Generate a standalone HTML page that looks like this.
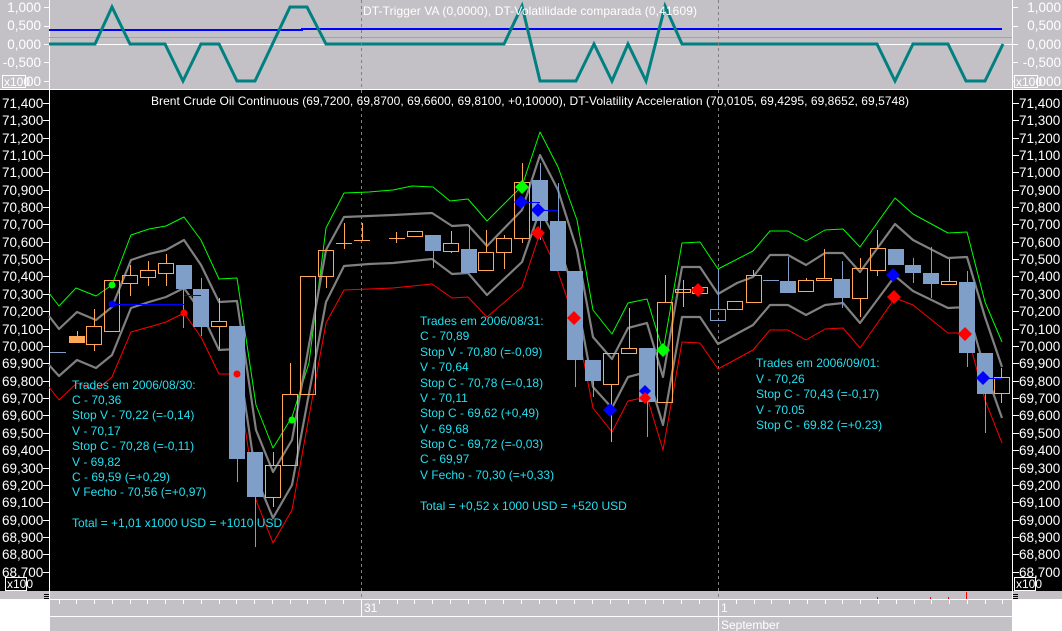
<!DOCTYPE html>
<html><head><meta charset="utf-8"><style>
html,body{margin:0;padding:0;background:#fff;width:1062px;height:631px;overflow:hidden}
svg{display:block}
text{font-family:"Liberation Sans",sans-serif;font-size:12px}
.ax text{font-size:13.5px}
</style></head><body>
<svg width="1062" height="631" viewBox="0 0 1062 631" xmlns="http://www.w3.org/2000/svg" shape-rendering="crispEdges">
<rect x="0" y="0" width="1062" height="90" fill="#c3c1c5"/>
<rect x="0" y="90" width="1062" height="501" fill="#000"/>
<rect x="0" y="591" width="1062" height="8" fill="#c3c1c5"/>
<rect x="50" y="599" width="962" height="32" fill="#c3c1c5"/>
<line x1="0" y1="89.5" x2="1062" y2="89.5" stroke="#fff"/>
<line x1="49.5" y1="0" x2="49.5" y2="599" stroke="#fff"/>
<line x1="1012.5" y1="0" x2="1012.5" y2="599" stroke="#fff"/>
<line x1="49" y1="44.5" x2="1012" y2="44.5" stroke="#fff"/>
<line x1="49" y1="37.5" x2="1012" y2="37.5" stroke="#8fa6c6"/>
<polyline points="49,30 302,30 302,29 1002,29" fill="none" stroke="#0000ff" stroke-width="2"/>
<polyline shape-rendering="auto" points="49,44 95,44 112,7 130,44 165,44 183,81 201,44 219,44 237,81 255,81 290,7 307,7 326,44 504,44 522,6 540,81 576,81 594,44 612,81 628,44 646,81 665,6 682,44 877,44 895,81 913,44 948,44 966,81 985,81 1003,44" fill="none" stroke="#008080" stroke-width="3"/>
<text x="530" y="15" text-anchor="middle" fill="#fff" textLength="334">DT-Trigger VA (0,0000), DT-Volatilidade comparada (0,41609)</text>
<g class="ax" fill="#fff" text-anchor="end">
<text x="41" y="12">1,000</text><text x="41" y="30">0,500</text><text x="41" y="49">0,000</text><text x="41" y="67">-0,500</text><text x="41" y="86">000</text>
<text x="1061" y="12">1,000</text><text x="1061" y="30">0,500</text><text x="1061" y="49">0,000</text><text x="1061" y="67">-0,500</text><text x="1061" y="86">000</text>
</g>
<path stroke="#fff" d="M44 7.5h5M44 26.5h5M44 44.5h5M44 62.5h5M44 81.5h5M1013 7.5h5M1013 26.5h5M1013 44.5h5M1013 62.5h5M1013 81.5h5"/>
<rect x="2.5" y="75.5" width="23" height="12" fill="#c3c1c5" stroke="#fff"/>
<text x="4" y="86" fill="#fff" font-size="10">x100</text>
<rect x="1014.5" y="75.5" width="23" height="12" fill="#c3c1c5" stroke="#fff"/>
<text x="1016" y="86" fill="#fff" font-size="10">x100</text>
<line x1="361.5" y1="0" x2="361.5" y2="599" stroke="#808080" stroke-dasharray="3,3"/>
<line x1="718.5" y1="0" x2="718.5" y2="599" stroke="#808080" stroke-dasharray="3,3"/>
<text x="530" y="105" text-anchor="middle" fill="#fff" textLength="758">Brent Crude Oil Continuous (69,7200, 69,8700, 69,6600, 69,8100, +0,10000), DT-Volatility Acceleration (70,0105, 69,4295, 69,8652, 69,5748)</text>
<g class="ax" fill="#fff">
<text x="2" y="108">71,400</text><text x="2" y="125">71,300</text><text x="2" y="143">71,200</text><text x="2" y="160">71,100</text><text x="2" y="177">71,000</text><text x="2" y="195">70,900</text><text x="2" y="212">70,800</text><text x="2" y="229">70,700</text><text x="2" y="247">70,600</text><text x="2" y="264">70,500</text><text x="2" y="281">70,400</text><text x="2" y="299">70,300</text><text x="2" y="316">70,200</text><text x="2" y="334">70,100</text><text x="2" y="351">70,000</text><text x="2" y="368">69,900</text><text x="2" y="386">69,800</text><text x="2" y="403">69,700</text><text x="2" y="420">69,600</text><text x="2" y="438">69,500</text><text x="2" y="455">69,400</text><text x="2" y="473">69,300</text><text x="2" y="490">69,200</text><text x="2" y="507">69,100</text><text x="2" y="525">69,000</text><text x="2" y="542">68,900</text><text x="2" y="559">68,800</text><text x="2" y="577">68,700</text>
</g>
<g class="ax" fill="#fff">
<text x="1019" y="108">71,400</text><text x="1019" y="125">71,300</text><text x="1019" y="143">71,200</text><text x="1019" y="160">71,100</text><text x="1019" y="177">71,000</text><text x="1019" y="195">70,900</text><text x="1019" y="212">70,800</text><text x="1019" y="229">70,700</text><text x="1019" y="247">70,600</text><text x="1019" y="264">70,500</text><text x="1019" y="281">70,400</text><text x="1019" y="299">70,300</text><text x="1019" y="316">70,200</text><text x="1019" y="334">70,100</text><text x="1019" y="351">70,000</text><text x="1019" y="368">69,900</text><text x="1019" y="386">69,800</text><text x="1019" y="403">69,700</text><text x="1019" y="420">69,600</text><text x="1019" y="438">69,500</text><text x="1019" y="455">69,400</text><text x="1019" y="473">69,300</text><text x="1019" y="490">69,200</text><text x="1019" y="507">69,100</text><text x="1019" y="525">69,000</text><text x="1019" y="542">68,900</text><text x="1019" y="559">68,800</text><text x="1019" y="577">68,700</text>
</g>
<g stroke="#fff">
<path d="M43 103.5h6M43 120.5h6M43 138.5h6M43 155.5h6M43 172.5h6M43 190.5h6M43 207.5h6M43 224.5h6M43 242.5h6M43 259.5h6M43 276.5h6M43 294.5h6M43 311.5h6M43 329.5h6M43 346.5h6M43 363.5h6M43 381.5h6M43 398.5h6M43 415.5h6M43 433.5h6M43 450.5h6M43 468.5h6M43 485.5h6M43 502.5h6M43 520.5h6M43 537.5h6M43 554.5h6M43 572.5h6"/>
<path d="M1013 103.5h6M1013 120.5h6M1013 138.5h6M1013 155.5h6M1013 172.5h6M1013 190.5h6M1013 207.5h6M1013 224.5h6M1013 242.5h6M1013 259.5h6M1013 276.5h6M1013 294.5h6M1013 311.5h6M1013 329.5h6M1013 346.5h6M1013 363.5h6M1013 381.5h6M1013 398.5h6M1013 415.5h6M1013 433.5h6M1013 450.5h6M1013 468.5h6M1013 485.5h6M1013 502.5h6M1013 520.5h6M1013 537.5h6M1013 554.5h6M1013 572.5h6"/>
</g>
<rect x="5.5" y="577.5" width="21" height="13" fill="#000" stroke="#fff"/>
<text x="7" y="588" fill="#fff" font-size="11">x100</text>
<rect x="1014.5" y="577.5" width="21" height="13" fill="#000" stroke="#fff"/>
<text x="1016" y="588" fill="#fff" font-size="11">x100</text>

<g fill="none" shape-rendering="auto" stroke-linejoin="round">
<polyline stroke="#00ff00" stroke-width="1" points="49,293 59,306 76,288 96,296 112,285 131,235 149,229 166,226 184,217 201,240 219,279 237,278 256,405 273,448 292,417 309,363 326,228 344,193 369,192 393,190 412,186 433,187 450,201 468,199 487,221 522,186 540,132 558,167 577,220 593,310 612,334 628,303 647,299 663,351 682,243 700,242 718,269 753,251 770,231 788,231 806,241 825,230 843,229 860,247 895,198 913,214 948,233 967,232 985,302 1002,342"/>
<polyline stroke="#808080" stroke-width="2.2" points="49,316 59,329 77,312 96,320 112,307 131,260 149,254 166,250 184,240 201,265 219,302 237,301 256,430 273,472 292,440 326,250 344,217 369,216 393,215 432,213 452,226 468,225 487,246 522,210 540,155 558,190 577,250 593,337 612,359 628,328 647,323 663,377 682,267 700,267 718,294 737,283 753,277 770,255 788,255 806,265 825,253 843,253 860,272 895,224 913,240 948,258 967,257 985,317 1002,367"/>
<polyline stroke="#808080" stroke-width="2.2" points="49,365 59,376 77,360 96,368 112,355 131,308 149,302 166,297 184,288 201,312 219,350 237,349 256,477 273,518 292,485 326,302 344,266 369,264 393,263 432,259 452,274 468,273 487,295 522,262 540,210 558,243 577,300 593,387 612,408 628,377 647,372 663,425 682,317 700,317 718,344 753,325 770,305 788,305 806,315 825,305 843,303 860,323 895,276 913,291 948,308 967,307 985,370 1002,418"/>
<polyline stroke="#ff0000" stroke-width="1" points="49,387 59,400 77,383 96,390 112,377 131,332 149,327 166,322 184,313 201,337 219,374 237,374 256,500 273,543 292,510 326,323 344,290 369,289 393,288 432,284 452,298 468,297 487,317 522,287 540,233 558,272 577,327 593,408 612,432 628,401 647,397 663,450 682,342 700,343 718,369 753,350 770,330 788,330 806,340 825,329 843,328 860,348 895,298 913,305 948,333 967,333 985,400 1002,443"/>
</g>

<g fill="#7f9fc8" stroke="none">
<rect x="50" y="352" width="16" height="1"/>
<rect x="183" y="265" width="1" height="63"/><rect x="176" y="265" width="16" height="24"/>
<rect x="201" y="278" width="1" height="58"/><rect x="193" y="289" width="16" height="38"/>
<rect x="237" y="326" width="1" height="156"/><rect x="229" y="326" width="16" height="133"/>
<rect x="255" y="452" width="1" height="95"/><rect x="247" y="452" width="16" height="45"/>
<rect x="433" y="235" width="1" height="33"/><rect x="425" y="235" width="16" height="16"/>
<rect x="469" y="225" width="1" height="48"/><rect x="461" y="249" width="16" height="24"/>
<rect x="540" y="163" width="1" height="77"/><rect x="532" y="180" width="16" height="41"/>
<rect x="558" y="183" width="1" height="88"/><rect x="550" y="221" width="16" height="50"/>
<rect x="575" y="271" width="1" height="116"/><rect x="567" y="271" width="16" height="89"/>
<rect x="593" y="360" width="1" height="37"/><rect x="585" y="360" width="16" height="21"/>
<rect x="647" y="348" width="1" height="89"/><rect x="639" y="348" width="16" height="54"/>
<rect x="718" y="269" width="1" height="40"/>
<rect x="763" y="280" width="16" height="1"/>
<rect x="788" y="257" width="1" height="36"/><rect x="780" y="281" width="16" height="12"/>
<rect x="842" y="261" width="1" height="47"/><rect x="834" y="279" width="16" height="19"/>
<rect x="888" y="249" width="16" height="16"/>
<rect x="913" y="258" width="1" height="25"/><rect x="905" y="265" width="16" height="8"/>
<rect x="931" y="247" width="1" height="51"/><rect x="923" y="273" width="16" height="11"/>
<rect x="967" y="271" width="1" height="96"/><rect x="959" y="282" width="16" height="71"/>
<rect x="985" y="353" width="1" height="80"/><rect x="977" y="353" width="16" height="41"/>
</g>
<rect x="710.5" y="309.5" width="15" height="11" fill="none" stroke="#7f9fc8"/>

<g stroke="#ffa858" fill="none">
<path d="M77.5 331v5M94.5 309v17M94.5 344v7M130.5 265v10M130.5 283v13M148.5 261v9M148.5 277v9M166.5 254v9M166.5 273v13M219.5 298v23M219.5 326v23M273.5 452v13M273.5 497v10M290.5 363v31M326.5 276v12"/>
<rect x="86.5" y="326.5" width="15" height="18"/>
<rect x="104.5" y="280.5" width="15" height="51"/>
<rect x="122.5" y="275.5" width="15" height="8"/>
<rect x="140.5" y="270.5" width="15" height="7"/>
<rect x="158.5" y="263.5" width="15" height="10"/>
<rect x="211.5" y="321.5" width="15" height="5"/>
<rect x="265.5" y="465.5" width="15" height="32"/>
<rect x="282.5" y="394.5" width="15" height="71"/>
<rect x="300.5" y="276.5" width="15" height="118"/>
<rect x="318.5" y="250.5" width="15" height="26"/>
<path d="M336 243.5h16M344.5 223v26M354 240.5h16M362.5 223v17M389 238.5h16M396.5 232v11"/>
<rect x="407.5" y="231.5" width="15" height="5"/>
<path d="M451.5 231v12M451.5 251v2M486.5 230v22M504.5 235v3M504.5 252v17M522.5 163v19M522.5 238v5M611.5 384v58M629.5 308v40M665.5 275v27M683.5 280v27"/>
<rect x="443.5" y="243.5" width="15" height="8"/>
<rect x="478.5" y="252.5" width="15" height="18"/>
<rect x="496.5" y="238.5" width="15" height="14"/>
<rect x="514.5" y="182.5" width="15" height="56"/>
<rect x="603.5" y="353.5" width="15" height="31"/>
<rect x="621.5" y="348.5" width="15" height="5"/>
<rect x="657.5" y="302.5" width="15" height="100"/>
<rect x="675.5" y="289.5" width="15" height="3"/>
<rect x="692.5" y="287.5" width="15" height="6"/>
<rect x="727.5" y="301.5" width="15" height="8"/>
<path d="M753.5 270v5M806.5 278v2M824.5 249v29M860.5 258v10M860.5 298v19M877.5 230v18M877.5 270v6M949.5 259v22M1001.5 368v9M1001.5 393v10"/>
<rect x="746.5" y="275.5" width="15" height="27"/>
<rect x="798.5" y="280.5" width="15" height="11"/>
<rect x="816.5" y="278.5" width="15" height="2"/>
<rect x="852.5" y="268.5" width="15" height="30"/>
<rect x="870.5" y="248.5" width="15" height="22"/>
<rect x="941.5" y="281.5" width="15" height="3"/>
<rect x="994.5" y="377.5" width="15" height="16"/>
</g>
<rect x="69" y="336" width="16" height="7" fill="#ffa858"/>

<g stroke="#0000ff"><path d="M112 304.5h72M184 295.5h17M521 202.5h19M538 210.5h20M983 378.5h19"/></g>
<g shape-rendering="auto">
<circle cx="112" cy="285" r="3.5" fill="#00ff00"/>
<circle cx="112" cy="304" r="3.5" fill="#0000ff"/>
<circle cx="184" cy="313" r="3.5" fill="#ff0000"/>
<circle cx="237" cy="374" r="3.5" fill="#ff0000"/>
<circle cx="292" cy="420" r="3.5" fill="#00ff00"/>
<g fill="#00ff00"><path d="M522 180l7 7-7 7-7-7zM663 343l7 7-7 7-7-7z"/></g>
<g fill="#0000ff"><path d="M521 195l7 7-7 7-7-7zM538 203l7 7-7 7-7-7zM610 403l7 7-7 7-7-7zM645 385l6 6-6 6-6-6zM893 268l7 7-7 7-7-7zM983 371l7 7-7 7-7-7z"/></g>
<g fill="#ff0000"><path d="M538 226l7 7-7 7-7-7zM574 311l7 7-7 7-7-7zM645 392l6 6-6 6-6-6zM698 283l7 7-7 7-7-7zM894 290l7 7-7 7-7-7zM965 327l7 7-7 7-7-7z"/></g>
</g>

<g fill="#20e0f0" shape-rendering="auto">
<text x="72" y="389">Trades em 2006/08/30:</text>
<text x="72" y="404">C - 70,36</text>
<text x="72" y="419">Stop V - 70,22  (=-0,14)</text>
<text x="72" y="435">V - 70,17</text>
<text x="72" y="450">Stop C - 70,28 (=-0,11)</text>
<text x="72" y="466">V - 69,82</text>
<text x="72" y="481">C - 69,59 (=+0,29)</text>
<text x="72" y="496">V Fecho - 70,56 (=+0,97)</text>
<text x="72" y="527">Total = +1,01 x1000 USD = +1010 USD</text>
<text x="420" y="325">Trades em 2006/08/31:</text>
<text x="420" y="340">C - 70,89</text>
<text x="420" y="356">Stop V - 70,80 (=-0,09)</text>
<text x="420" y="371">V - 70,64</text>
<text x="420" y="387">Stop C - 70,78 (=-0,18)</text>
<text x="420" y="402">V - 70,11</text>
<text x="420" y="417">Stop C - 69,62 (+0,49)</text>
<text x="420" y="433">V - 69,68</text>
<text x="420" y="448">Stop C - 69,72 (=-0,03)</text>
<text x="420" y="463">C - 69,97</text>
<text x="420" y="479">V Fecho - 70,30 (=+0,33)</text>
<text x="420" y="510">Total = +0,52 x 1000 USD = +520 USD</text>
<text x="756" y="367">Trades em 2006/09/01:</text>
<text x="756" y="383">V - 70,26</text>
<text x="756" y="398">Stop C - 70,43 (=-0,17)</text>
<text x="756" y="414">V - 70.05</text>
<text x="756" y="429">Stop C - 69.82  (=+0.23)</text>
</g>

<line x1="50" y1="599.5" x2="1012" y2="599.5" stroke="#fff"/>
<line x1="50" y1="616.5" x2="1012" y2="616.5" stroke="#fff"/>
<line x1="361.5" y1="599" x2="361.5" y2="616" stroke="#fff"/>
<line x1="718.5" y1="599" x2="718.5" y2="631" stroke="#fff"/>
<path stroke="#fff" d="M59.5 599v5M76.5 599v5M94.5 599v5M112.5 599v5M130.5 599v5M147.5 599v5M165.5 599v5M183.5 599v5M201.5 599v5M219.5 599v5M236.5 599v5M254.5 599v5M272.5 599v5M290.5 599v5M307.5 599v5M325.5 599v5M343.5 599v5M379.5 599v5M397.5 599v5M414.5 599v5M432.5 599v5M450.5 599v5M468.5 599v5M485.5 599v5M503.5 599v5M521.5 599v5M539.5 599v5M556.5 599v5M574.5 599v5M592.5 599v5M610.5 599v5M628.5 599v5M645.5 599v5M663.5 599v5M681.5 599v5M699.5 599v5M736.5 599v5M754.5 599v5M771.5 599v5M789.5 599v5M807.5 599v5M825.5 599v5M842.5 599v5M860.5 599v5M878.5 599v5M896.5 599v5M914.5 599v5M931.5 599v5M949.5 599v5M967.5 599v5M985.5 599v5M1002.5 599v5"/>
<path stroke="#ff0000" d="M877.5 597v2M930.5 597v2M948.5 597v2M966.5 592v7"/>
<path stroke="#000" d="M1013 594.5h5M1013 596.5h5M1013 598.5h5M44 594.5h5M44 596.5h5M44 598.5h5"/>
<text x="364" y="612" fill="#fff" font-size="13">31</text>
<text x="721" y="612" fill="#fff" font-size="13">1</text>
<text x="721" y="629" fill="#fff" font-size="13">September</text>
</svg>
</body></html>
